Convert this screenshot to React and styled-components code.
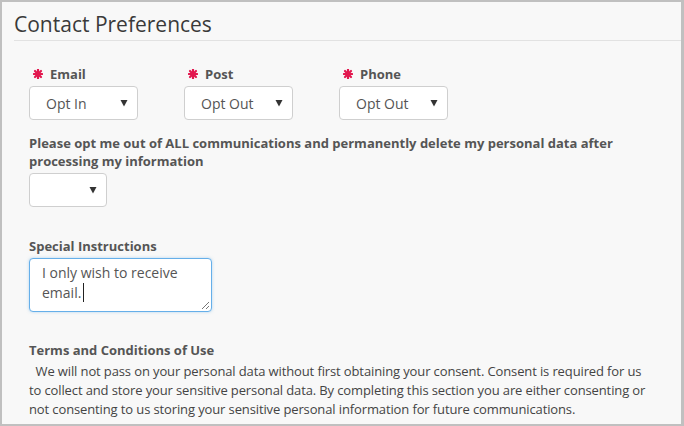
import styled, { createGlobalStyle } from "styled-components"

const Global = createGlobalStyle`
  html, body {
    margin: 0;
    padding: 0;
    background: #ffffff;
  }
  * {
    box-sizing: border-box;
  }
`

const Panel = styled.div`
  width: 684px;
  height: 426px;
  overflow: hidden;
  background: #f8f8f8;
  border: 2px solid #c0c0c0;
  border-right-width: 3px;
  font-family: "Open Sans", "Liberation Sans", sans-serif;
  color: #555;
`

const Title = styled.h2`
  margin: 0 0 0 12px;
  padding: 9px 0 3px;
  font-size: 21px;
  font-weight: 400;
  line-height: 26px;
  color: #3a3a3a;
  border-bottom: 1px solid #e2e2e2;
`

const Form = styled.div`
  padding: 24px 20px 0 27px;
  display: flex;
  flex-direction: column;
`

const Row = styled.div`
  display: flex;
  gap: 46px;
`

const Field = styled.div`
  display: flex;
  flex-direction: column;
  gap: 3px;
  margin-top: ${p => p.$top || 0}px;
`

const Label = styled.label`
  display: flex;
  align-items: center;
  gap: 7px;
  font-size: 13px;
  font-weight: 700;
  line-height: 18px;
  color: #555;
  max-width: 600px;

  svg {
    margin-left: 4px;
  }
`

const SelectBox = styled.div`
  position: relative;
  width: ${p => p.$width}px;
  height: 34px;
  background: #fff;
  border: 1px solid #cfcfcf;
  border-radius: 4px;
  display: flex;
  align-items: center;
  padding-left: 16px;
  font-size: 14px;
  color: #555;
`

const Arrow = styled.svg`
  position: absolute;
  right: 9px;
  top: 12px;
`

const TextBox = styled.div`
  position: relative;
  width: 183px;
  height: 54px;
  background: #fff;
  border: 1px solid #66afe9;
  border-radius: 4px;
  box-shadow: 0 0 3px rgba(102, 175, 233, 0.5);
  padding: 4px 12px;
  font-size: 14px;
  line-height: 20px;
  color: #555;
`

const Caret = styled.span`
  display: inline-block;
  width: 1px;
  height: 19px;
  background: #222;
  vertical-align: -4px;
  margin-left: 2px;
`

const Grip = styled.svg`
  position: absolute;
  right: 1px;
  bottom: 1px;
`

const Terms = styled.p`
  margin: 0;
  font-size: 13px;
  letter-spacing: -0.12px;
  line-height: 19px;
  color: #444;
  max-width: 626px;
`

const Star = () => (
  <svg width="10" height="10" viewBox="0 0 10 10">
    <g stroke="#e2184f" strokeWidth="2.2" strokeLinecap="round">
      <line x1="5" y1="0.8" x2="5" y2="9.2" />
      <line x1="0.8" y1="5" x2="9.2" y2="5" />
      <line x1="2" y1="2" x2="8" y2="8" />
      <line x1="8" y1="2" x2="2" y2="8" />
    </g>
    <circle cx="5" cy="5" r="2.6" fill="#e2184f" />
  </svg>
)

const Select = ({ value, width }) => (
  <SelectBox $width={width}>
    {value}
    <Arrow width="8" height="8" viewBox="0 0 8 8">
      <path d="M0.5 1 H7.5 L4 7.5 Z" fill="#333" />
    </Arrow>
  </SelectBox>
)

const App = () => {
  const channels = [
    { name: "Email", value: "Opt In" },
    { name: "Post", value: "Opt Out" },
    { name: "Phone", value: "Opt Out" },
  ]
  return (
    <>
      <Global />
      <Panel>
        <Title>Contact Preferences</Title>
        <Form>
          <Row>
            {channels.map(c => (
              <Field key={c.name}>
                <Label>
                  <Star />
                  {c.name}
                </Label>
                <Select value={c.value} width={109} />
              </Field>
            ))}
          </Row>
          <Field $top={14}>
            <Label>
              Please opt me out of ALL communications and permanently delete my personal data after processing my information
            </Label>
            <Select value="" width={78} />
          </Field>
          <Field $top={30}>
            <Label>Special Instructions</Label>
            <TextBox>
              I only wish to receive email.
              <Caret />
              <Grip width="10" height="10" viewBox="0 0 10 10">
                <g stroke="#777" strokeWidth="1">
                  <line x1="2" y1="9" x2="9" y2="2" />
                  <line x1="6" y1="9" x2="9" y2="6" />
                </g>
              </Grip>
            </TextBox>
          </Field>
          <Field $top={29}>
            <Label>Terms and Conditions of Use</Label>
            <Terms>
              {"\u00a0\u00a0We will not pass on your personal data without first obtaining your consent. Consent is required for us to collect and store your sensitive personal data. By completing this section you are either consenting or not consenting to us storing your sensitive personal information for future communications."}
            </Terms>
          </Field>
        </Form>
      </Panel>
    </>
  )
}

export default App
